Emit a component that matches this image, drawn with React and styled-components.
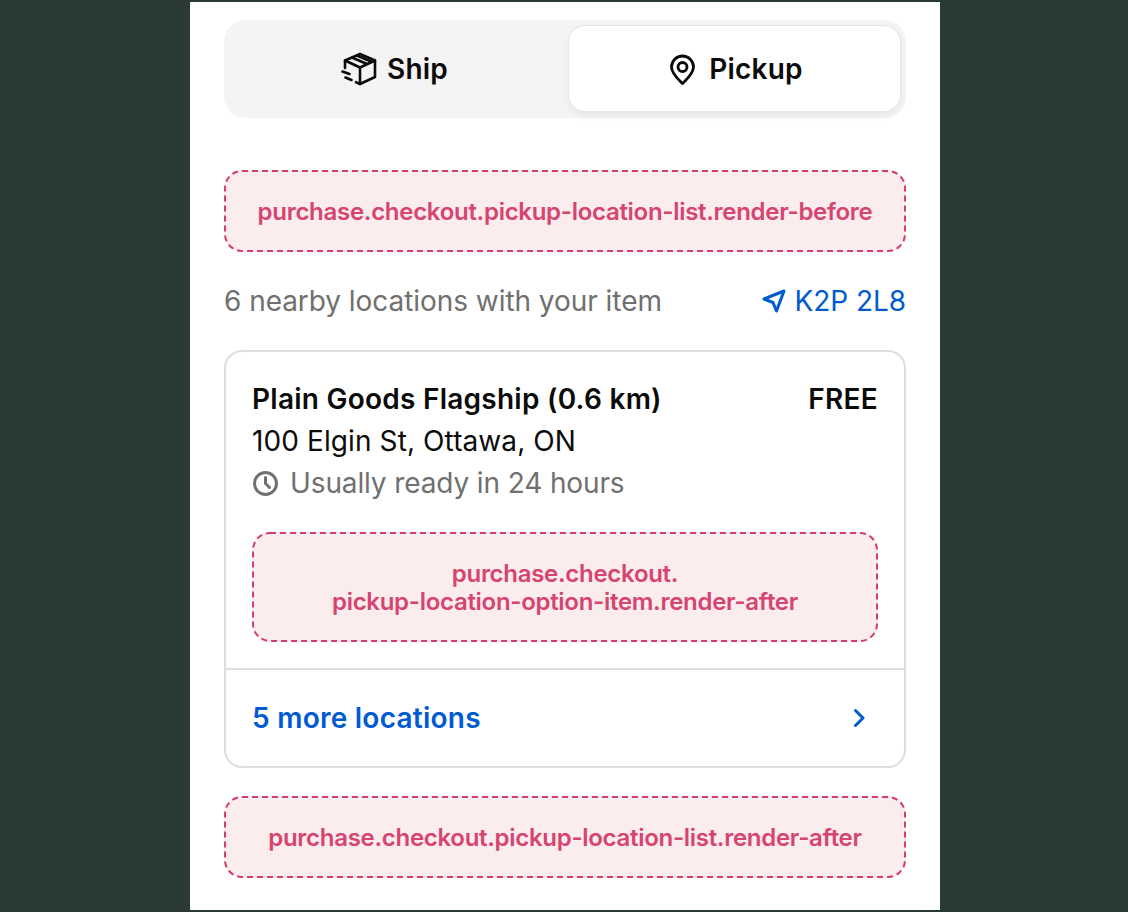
import React from "react";
import styled, { createGlobalStyle } from "styled-components";

const GlobalStyle = createGlobalStyle`
  html, body {
    margin: 0;
    height: 100%;
    background: #2a3a34;
  }
  body {
    font-family: Inter, "Liberation Sans", sans-serif;
    overflow: hidden;
  }
`;

const Panel = styled.main`
  box-sizing: border-box;
  width: 750px;
  height: 908px;
  margin: 2px 0 0 190px;
  padding: 18px 34px 0;
  background: #fff;
  display: flex;
  flex-direction: column;
`;

const Tabs = styled.div`
  height: 98px;
  box-sizing: border-box;
  padding: 6px 6px 7px;
  border-radius: 22px;
  background: #f4f4f4;
  display: grid;
  grid-template-columns: 329px 331px;
  column-gap: 10px;
  margin-bottom: 52px;
`;

const Tab = styled.div`
  display: flex;
  align-items: center;
  justify-content: center;
  gap: ${(p) => (p.$active ? 13 : 10)}px;
  font-size: 28px;
  font-weight: 600;
  letter-spacing: 0.2px;
  color: #0b0b0b;
  border-radius: 16px;
  background: ${(p) => (p.$active ? "#fff" : "transparent")};
  box-shadow: ${(p) =>
    p.$active ? "0 0 0 1px #e6e6e6, 0 4px 8px rgba(0,0,0,0.06)" : "none"};
`;

const SlotBox = styled.div`
  position: relative;
  box-sizing: border-box;
  height: ${(p) => p.$height || 82}px;
  padding-top: 2px;
  border-radius: 18px;
  background: #fbecee;
  color: #d64470;
  font-size: 24px;
  font-weight: 600;
  letter-spacing: -0.29px;
  line-height: 28px;
  text-align: center;
  display: flex;
  align-items: center;
  justify-content: center;
`;

const DashFrame = styled.svg`
  position: absolute;
  inset: 0;
  width: 100%;
  height: 100%;
  fill: none;
  pointer-events: none;
`;

const DashRect = styled.rect`
  x: 1px;
  y: 1px;
  width: calc(100% - 2px);
  height: calc(100% - 2px);
  rx: 17px;
  stroke: #d43d6b;
  stroke-width: 2px;
  stroke-dasharray: 6 4;
`;

const Summary = styled.div`
  display: flex;
  justify-content: space-between;
  align-items: center;
  height: 34px;
  margin: 32px 0 32px;
  font-size: 28px;
  letter-spacing: -0.05px;
  color: #707070;
`;

const Postcode = styled.span`
  display: flex;
  align-items: center;
  gap: 8px;
  color: #005bd1;
`;

const Card = styled.section`
  box-sizing: border-box;
  height: 418px;
  border: 2px solid #dedede;
  border-radius: 18px;
  margin-bottom: 28px;
  display: flex;
  flex-direction: column;
`;

const Location = styled.div`
  padding: 26px 26px 26px;
  border-bottom: 2px solid #dedede;
`;

const TitleRow = styled.div`
  display: flex;
  justify-content: space-between;
  font-size: 28px;
  line-height: 42px;
  font-weight: 600;
  letter-spacing: 0.25px;
  color: #0b0b0b;
`;

const Address = styled.div`
  font-size: 28px;
  line-height: 42px;
  letter-spacing: 0.1px;
  color: #0b0b0b;
`;

const Ready = styled.div`
  display: flex;
  align-items: center;
  gap: 11px;
  font-size: 28px;
  line-height: 42px;
  letter-spacing: -0.12px;
  color: #707070;
  margin-bottom: 28px;
`;

const MoreRow = styled.div`
  flex: 1;
  display: flex;
  align-items: center;
  justify-content: space-between;
  padding: 0 39px 0 26px;
  font-size: 28px;
  font-weight: 600;
  letter-spacing: 0.25px;
  color: #005bd1;
`;

const Slot = ({ height, children }) => (
  <SlotBox $height={height}>
    <DashFrame aria-hidden="true">
      <DashRect />
    </DashFrame>
    <span>{children}</span>
  </SlotBox>
);

const PackageIcon = () => (
  <svg width="36" height="34" viewBox="0 0 36 34" fill="none" stroke="#0b0b0b" strokeWidth="2.6" strokeLinecap="round" strokeLinejoin="round">
    <path d="M4 16V8.500L19 2l15 6.500V25L19 32l-4-1.800" />
    <path d="M4 8.500L19 15.500L34 8.500M19 15.500V32M11 5.500l15 6.500M16 3.500l15 6.500" />
    <path d="M1.500 19.500l7 2.500M4.500 25.500l6 2.500" />
  </svg>
);

const PinIcon = () => (
  <svg width="30" height="32" viewBox="0 0 30 32" fill="none" stroke="#0b0b0b" strokeWidth="2.8" strokeLinejoin="round">
    <path d="M16.500 30.500C12 26 5.500 20.500 5.500 14a11 11 0 0 1 22 0C27.500 20.500 21 26 16.500 30.500Z" />
    <circle cx="16.500" cy="14" r="4.500" />
  </svg>
);

const ArrowIcon = () => (
  <svg width="24" height="24" viewBox="0 0 24 24" fill="none" stroke="#005bd1" strokeWidth="3" strokeLinecap="round" strokeLinejoin="round">
    <path d="M2 10L22 2L14.500 22L11 13.500Z" />
  </svg>
);

const ClockIcon = () => (
  <svg width="27" height="27" viewBox="0 0 27 27" fill="none" stroke="#707070" strokeWidth="3" strokeLinecap="round" strokeLinejoin="round">
    <circle cx="13.500" cy="13.500" r="11" />
    <path d="M13.500 7.500v6l4 4" />
  </svg>
);

const ChevronIcon = () => (
  <svg width="12" height="20" viewBox="0 0 12 20" fill="none" stroke="#005bd1" strokeWidth="3" strokeLinecap="round" strokeLinejoin="round">
    <path d="M2.500 2.500l7.500 7.500-7.500 7.500" />
  </svg>
);

export default function App() {
  return (
    <>
      <GlobalStyle />
      <Panel>
        <Tabs>
          <Tab>
            <PackageIcon />
            Ship
          </Tab>
          <Tab $active>
            <PinIcon />
            Pickup
          </Tab>
        </Tabs>
        <Slot>purchase.checkout.pickup-location-list.render-before</Slot>
        <Summary>
          <span>6 nearby locations with your item</span>
          <Postcode>
            <ArrowIcon />
            K2P 2L8
          </Postcode>
        </Summary>
        <Card>
          <Location>
            <TitleRow>
              <span>Plain Goods Flagship (0.6 km)</span>
              <span>FREE</span>
            </TitleRow>
            <Address>100 Elgin St, Ottawa, ON</Address>
            <Ready>
              <ClockIcon />
              Usually ready in 24 hours
            </Ready>
            <Slot height={110}>
              purchase.checkout.
              <br />
              pickup-location-option-item.render-after
            </Slot>
          </Location>
          <MoreRow>
            <span>5 more locations</span>
            <ChevronIcon />
          </MoreRow>
        </Card>
        <Slot>purchase.checkout.pickup-location-list.render-after</Slot>
      </Panel>
    </>
  );
}
